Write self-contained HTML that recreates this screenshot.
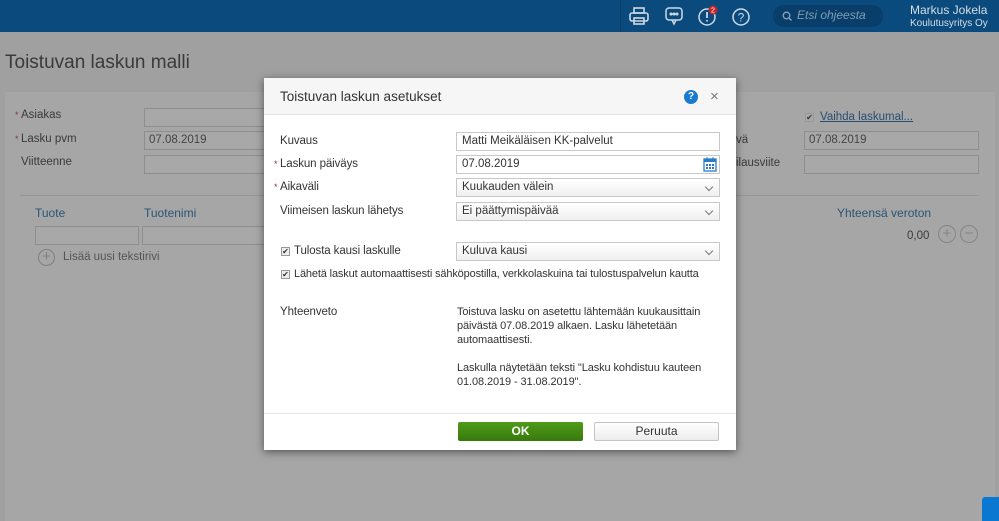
<!DOCTYPE html>
<html><head><meta charset="utf-8"><style>
*{box-sizing:border-box;margin:0;padding:0}
body{width:999px;height:521px;overflow:hidden;background:#a0a0a0;font-family:"Liberation Sans","DejaVu Sans",sans-serif;font-size:11.5px;color:#333;position:relative}
.abs{position:absolute}
.hdr{left:0;top:0;width:999px;height:32px;background:#0a4a7c}
.panel{left:5px;top:92px;width:990px;height:429px;background:#a6a6a6}
.inp{position:absolute;border:1px solid #8e8e8e;background:#a8a8a8;height:19px;font-size:11.5px;padding:2px 4px;color:#444}
.lbl{position:absolute;font-size:11.5px;color:#3a3a3a}
.req:before{content:"*";color:#7a3a3a;font-size:9px;position:absolute;left:-6px;top:1px}
.dlg{left:264px;top:78px;width:472px;height:372px;background:#fff;box-shadow:0 2px 8px rgba(0,0,0,.5)}
.dh{left:0;top:0;width:472px;height:37px;background:#f6f6f6;border-bottom:1px solid #e2e2e2}
.dl{position:absolute;left:16px;font-size:11.5px;color:#333;white-space:nowrap;letter-spacing:-0.1px}
.di{position:absolute;left:192px;width:264px;height:19px;border:1px solid #c8c8c8;padding:2px 5px;font-size:11.5px;color:#333;background:#fff}
.sel{background:linear-gradient(#fff,#f0f0f0)}
.sel:after{content:"";position:absolute;right:7px;top:5px;width:5px;height:5px;border-right:1px solid #777;border-bottom:1px solid #777;transform:rotate(45deg)}
.cb{position:absolute;width:9px;height:9px;border:1px solid #999;background:#eee;font-size:8px;line-height:8px;text-align:center;color:#333}
</style></head><body>
<div class="abs hdr">
 <div class="abs" style="left:620px;top:0;width:1px;height:32px;background:#0d3f68"></div>
 <svg class="abs" style="left:628px;top:6px" width="22" height="20" viewBox="0 0 22 20" fill="none" stroke="#cfd9e3" stroke-width="1.6"><rect x="6" y="2" width="10" height="5"/><rect x="2" y="7" width="18" height="8" rx="2"/><rect x="6" y="12" width="10" height="6"/></svg>
 <svg class="abs" style="left:664px;top:6px" width="20" height="20" viewBox="0 0 20 20" fill="none" stroke="#cfd9e3" stroke-width="1.5"><rect x="2" y="2" width="16" height="12" rx="3"/><path d="M8 14l2 4 2-4"/><circle cx="7" cy="8" r=".8"/><circle cx="10" cy="8" r=".8"/><circle cx="13" cy="8" r=".8"/></svg>
 <svg class="abs" style="left:697px;top:5px" width="24" height="22" viewBox="0 0 24 22"><circle cx="10" cy="12" r="8" fill="none" stroke="#cfd9e3" stroke-width="1.5"/><path d="M10 7v6M10 15v1.5" stroke="#cfd9e3" stroke-width="1.8"/><circle cx="16" cy="5" r="4.5" fill="#c0272d"/><text x="16" y="7.5" font-size="7" fill="#fff" text-anchor="middle" font-family="Liberation Sans">2</text></svg>
 <svg class="abs" style="left:731px;top:7px" width="20" height="20" viewBox="0 0 20 20"><circle cx="10" cy="10" r="8" fill="none" stroke="#cfd9e3" stroke-width="1.5"/><text x="10" y="14.5" font-size="12" fill="#cfd9e3" text-anchor="middle" font-family="Liberation Sans">?</text></svg>
 <div class="abs" style="left:773px;top:5px;width:110px;height:22px;border-radius:11px;background:#083e69"></div>
 <svg class="abs" style="left:782px;top:11px" width="10" height="10" viewBox="0 0 10 10" fill="none" stroke="#8aa3b8" stroke-width="1.3"><circle cx="4.5" cy="4.5" r="3.3"/><path d="M7 7l2.5 2.5"/></svg>
 <div class="abs" style="left:797px;top:8px;color:#7f9cb5;font-style:italic;font-size:12px">Etsi ohjeesta</div>
 <div class="abs" style="left:910px;top:3px;color:#d6dee6;font-size:12px">Markus Jokela</div>
 <div class="abs" style="left:910px;top:18px;color:#d6dee6;font-size:10px">Koulutusyritys Oy</div>
</div>
<div class="abs" style="left:5px;top:52px;font-size:19px;color:#3a3a3a">Toistuvan laskun malli</div>
<div class="abs panel"></div>
<div class="lbl req" style="left:21px;top:109px">Asiakas</div>
<div class="lbl req" style="left:21px;top:133px">Lasku pvm</div>
<div class="lbl" style="left:21px;top:156px">Viitteenne</div>
<div class="inp" style="left:144px;top:108px;width:130px"></div>
<div class="inp" style="left:144px;top:131px;width:130px">07.08.2019</div>
<div class="inp" style="left:144px;top:155px;width:130px"></div>
<div class="abs" style="left:20px;top:195px;width:958px;height:1px;background:#959595"></div>
<div class="lbl" style="left:35px;top:206px;color:#2a5478;font-size:12px">Tuote</div>
<div class="lbl" style="left:144px;top:206px;color:#2a5478;font-size:12px">Tuotenimi</div>
<div class="inp" style="left:35px;top:226px;width:104px"></div>
<div class="inp" style="left:142px;top:226px;width:130px"></div>
<div class="abs" style="left:38px;top:249px;width:17px;height:17px;border:1px solid #808080;border-radius:50%;text-align:center;line-height:14px;color:#808080;font-size:15px">+</div>
<div class="lbl" style="left:63px;top:251px;color:#555">Lisää uusi tekstirivi</div>
<div class="cb" style="left:805px;top:113px;background:#a8a8a8">✔</div>
<div class="lbl" style="left:820px;top:111px;color:#2a4d6e;text-decoration:underline">Vaihda laskumal...</div>
<div class="lbl" style="left:736px;top:134px">vä</div>
<div class="lbl" style="left:736px;top:157px">ilausviite</div>
<div class="inp" style="left:804px;top:131px;width:175px">07.08.2019</div>
<div class="inp" style="left:804px;top:155px;width:175px"></div>
<div class="lbl" style="left:837px;top:206px;color:#2a5478;font-size:12px">Yhteensä veroton</div>
<div class="lbl" style="left:907px;top:230px">0,00</div>
<div class="abs" style="left:938px;top:225px;width:18px;height:18px;border:1px solid #858585;border-radius:50%;text-align:center;line-height:15px;color:#858585;font-size:15px">+</div>
<div class="abs" style="left:960px;top:225px;width:18px;height:18px;border:1px solid #858585;border-radius:50%;text-align:center;line-height:15px;color:#858585;font-size:15px">−</div>
<div class="abs" style="left:982px;top:497px;width:17px;height:24px;background:#0a78d0;border-radius:3px 0 0 0"></div>

<div class="abs dlg">
 <div class="abs dh"></div>
 <div class="abs" style="left:16px;top:11px;font-size:13.5px;color:#333">Toistuvan laskun asetukset</div>
 <div class="abs" style="left:420px;top:12px;width:14px;height:14px;border-radius:50%;background:#1a7ad0;color:#fff;font-size:10px;font-weight:bold;text-align:center;line-height:14px">?</div>
 <div class="abs" style="left:446px;top:10px;font-size:15px;color:#777">×</div>
 <div class="dl" style="top:57px">Kuvaus</div>
 <div class="di" style="top:54px">Matti Meikäläisen KK-palvelut</div>
 <div class="dl req" style="top:80px">Laskun päiväys</div>
 <div class="di" style="top:77px">07.08.2019
  <svg style="position:absolute;right:2px;top:1px" width="14" height="15" viewBox="0 0 14 15"><rect x="1" y="2" width="12" height="12" fill="none" stroke="#2a7cc7" stroke-width="1.3"/><rect x="1" y="2" width="12" height="3" fill="#2a7cc7"/><path d="M4 0v3M10 0v3" stroke="#2a7cc7"/><g fill="#2a7cc7"><rect x="3" y="7" width="2" height="2"/><rect x="6" y="7" width="2" height="2"/><rect x="9" y="7" width="2" height="2"/><rect x="3" y="10" width="2" height="2"/><rect x="6" y="10" width="2" height="2"/><rect x="9" y="10" width="2" height="2"/></g></svg></div>
 <div class="dl req" style="top:103px">Aikaväli</div>
 <div class="di sel" style="top:100px">Kuukauden välein</div>
 <div class="dl" style="top:127px">Viimeisen laskun lähetys</div>
 <div class="di sel" style="top:124px">Ei päättymispäivää</div>
 <div class="cb" style="left:17px;top:169px">✔</div>
 <div class="dl" style="left:30px;top:167px">Tulosta kausi laskulle</div>
 <div class="di sel" style="top:164px">Kuluva kausi</div>
 <div class="cb" style="left:17px;top:192px">✔</div>
 <div class="dl" style="left:30px;top:190px;font-size:11px;letter-spacing:-0.15px">Lähetä laskut automaattisesti sähköpostilla, verkkolaskuina tai tulostuspalvelun kautta</div>
 <div class="dl" style="top:228px">Yhteenveto</div>
 <div class="abs" style="left:193px;top:227px;width:275px;font-size:11px;line-height:14px;color:#333;letter-spacing:-0.1px">Toistuva lasku on asetettu lähtemään kuukausittain<br>päivästä 07.08.2019 alkaen. Lasku lähetetään<br>automaattisesti.<br><br>Laskulla näytetään teksti "Lasku kohdistuu kauteen<br>01.08.2019 - 31.08.2019".</div>
 <div class="abs" style="left:0;top:335px;width:472px;height:1px;background:#e6e6e6"></div>
 <div class="abs" style="left:194px;top:344px;width:125px;height:19px;background:linear-gradient(#4f9a1a,#377a0c);border-radius:2px;color:#fff;font-weight:bold;text-align:center;line-height:19px;font-size:12px">OK</div>
 <div class="abs" style="left:330px;top:344px;width:125px;height:19px;background:linear-gradient(#fff,#ececec);border:1px solid #c4c4c4;border-radius:2px;color:#333;text-align:center;line-height:17px;font-size:12px">Peruuta</div>
</div>
</body></html>
